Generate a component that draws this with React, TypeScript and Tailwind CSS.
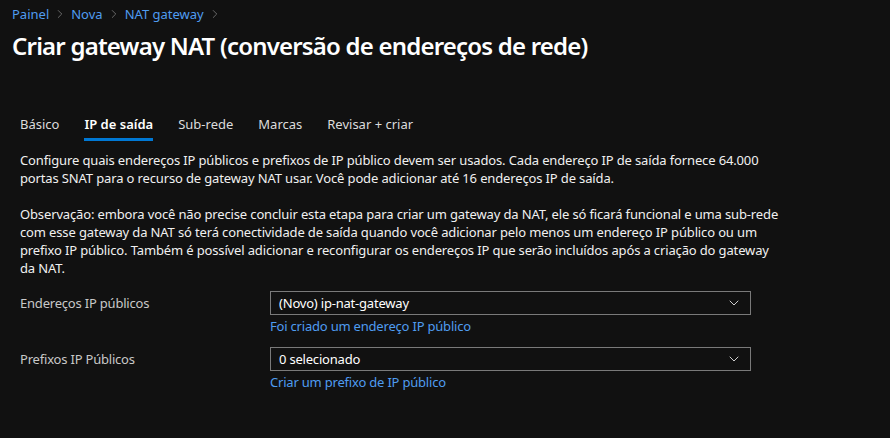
import { ChevronRight, ChevronDown } from "lucide-react";

const tabs = ["Básico", "IP de saída", "Sub-rede", "Marcas", "Revisar + criar"];

function Crumb({ label }: { label: string }) {
  return (
    <span className="flex items-center">
      <span className="text-[#4f9cf0]">{label}</span>
      <ChevronRight size={14} strokeWidth={1.2} className="mx-[4px] text-[#8a8a8a]" />
    </span>
  );
}

function Field({ label, value, link }: { label: string; value: string; link: string }) {
  return (
    <div className="flex">
      <div className="w-[250px] pt-[3px] text-[#c8c8c8]">{label}</div>
      <div className="flex flex-col">
        <div className="flex h-[24px] w-[481px] items-center justify-between border border-[#7a7a7a] pl-[8px] pr-[8px]">
          <span className="text-white">{value}</span>
          <ChevronDown size={16} strokeWidth={1.2} className="text-white" />
        </div>
        <a className="mt-[2px] text-[#4f9cf0]">{link}</a>
      </div>
    </div>
  );
}

export default function App() {
  return (
    <div
      className="h-[438px] w-[890px] bg-[#111111] text-[13px] tracking-[-0.2px] text-white"
      style={{ fontFamily: '"Segoe UI", "Noto Sans", sans-serif' }}
    >
      <div className="flex items-center pl-[12px] pt-[5px] leading-[18px] tracking-normal">
        <Crumb label="Painel" />
        <Crumb label="Nova" />
        <Crumb label="NAT gateway" />
      </div>
      <h1 className="pl-[12px] pt-[7px] text-[24px] font-semibold leading-[32px] tracking-[-0.8px]">
        Criar gateway NAT (conversão de endereços de rede)
      </h1>

      <div className="mt-[53px] flex gap-[25px] pl-[20px] tracking-normal">
        {tabs.map((t, i) => (
          <div
            key={t}
            className={
              i === 1
                ? "border-b-[3px] border-[#0078d4] pb-[3px] font-semibold"
                : "pb-[6px] text-[#dcdcdc]"
            }
          >
            {t}
          </div>
        ))}
      </div>

      <div className="mt-[10px] pl-[20px] pr-[20px] leading-[18px] tracking-[-0.14px] text-[#f0f0f0]">
        <p>
          Configure quais endereços IP públicos e prefixos de IP público devem ser usados. Cada endereço IP de saída fornece 64.000
          <br />
          portas SNAT para o recurso de gateway NAT usar. Você pode adicionar até 16 endereços IP de saída.
        </p>
        <p className="mt-[18px]">
          Observação: embora você não precise concluir esta etapa para criar um gateway da NAT, ele só ficará funcional e uma sub-rede
          <br />
          com esse gateway da NAT só terá conectividade de saída quando você adicionar pelo menos um endereço IP público ou um
          <br />
          prefixo IP público. Também é possível adicionar e reconfigurar os endereços IP que serão incluídos após a criação do gateway
          <br />
          da NAT.
        </p>
      </div>

      <div className="mt-[14px] flex flex-col gap-[12px] pl-[20px] leading-[18px]">
        <Field label="Endereços IP públicos" value="(Novo) ip-nat-gateway" link="Foi criado um endereço IP público" />
        <Field label="Prefixos IP Públicos" value="0 selecionado" link="Criar um prefixo de IP público" />
      </div>
    </div>
  );
}
